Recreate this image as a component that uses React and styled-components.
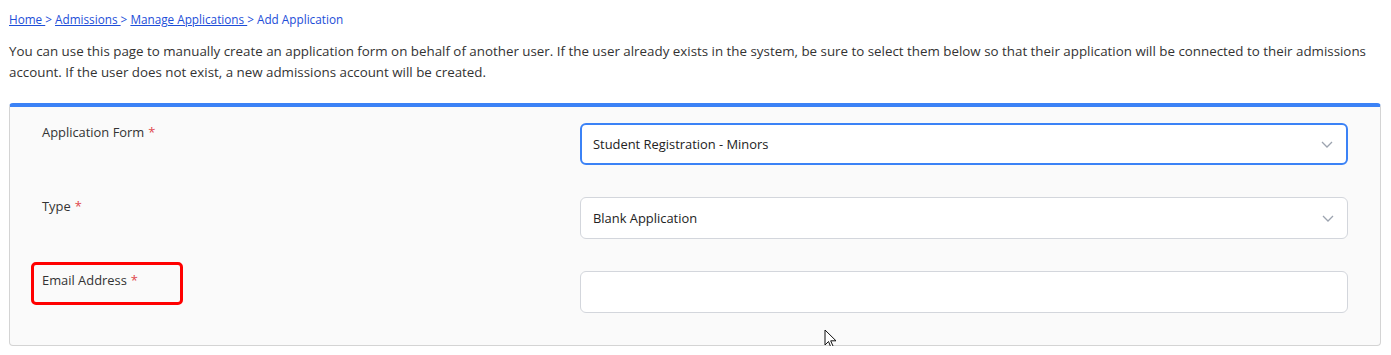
import React from "react";
import styled, { createGlobalStyle } from "styled-components";

const GlobalStyle = createGlobalStyle`
  body {
    margin: 0;
    background: #ffffff;
    font-family: "Open Sans", "Noto Sans", sans-serif;
    color: #333333;
  }
`;

const Page = styled.div`
  padding: 10px 10px 0 9px;
`;

const Breadcrumb = styled.nav`
  font-size: 11.75px;
  line-height: 18px;
  color: #1d4ed8;
  a {
    color: #1d4ed8;
    text-decoration: underline;
  }
`;

const Intro = styled.p`
  margin: 13px 0 20px;
  font-size: 13.35px;
  line-height: 21px;
  color: #333333;
`;

const Card = styled.section`
  position: relative;
  background: #fafafa;
  border: 1px solid #d4d4d4;
  border-top: 4px solid #3b82f6;
  border-radius: 4px;
  padding: 16px 32px 0 32px;
`;

const Row = styled.div`
  display: grid;
  grid-template-columns: 538px 1fr;
  margin-bottom: 32px;
`;

const Label = styled.label`
  position: relative;
  align-self: start;
  justify-self: start;
  padding-top: 1px;
  font-size: 12.9px;
  line-height: 17px;
  color: #333333;
  &::after {
    content: "";
    display: ${(p) => (p.$highlight ? "block" : "none")};
    position: absolute;
    left: -11px;
    top: -9px;
    width: 152px;
    height: 43px;
    box-sizing: border-box;
    border: 3px solid #ff0000;
    border-radius: 5px;
  }
`;

const Required = styled.span`
  color: #e0474c;
  margin-left: 4px;
`;

const Field = styled.div`
  position: relative;
  height: 42px;
  box-sizing: border-box;
  background: #ffffff;
  border: ${(p) => (p.$focused ? "2px solid #3b82f6" : "1px solid #d3d6dc")};
  border-radius: 6px;
  display: flex;
  align-items: center;
  padding: 0 ${(p) => (p.$focused ? "11px" : "12px")};
  font-size: 12.9px;
  color: #222222;
`;

const Chevron = styled.svg`
  position: absolute;
  right: 13px;
  top: 50%;
  margin-top: -3px;
`;

const Cursor = styled.svg`
  position: absolute;
  left: 814px;
  top: 222px;
`;

const ChevronIcon = () => (
  <Chevron width="12" height="7" viewBox="0 0 12 7">
    <path d="M1 1l5 5 5-5" fill="none" stroke="#9ca3af" strokeWidth="1.3" />
  </Chevron>
);

export default function App() {
  return (
    <Page>
      <GlobalStyle />
      <Breadcrumb>
        <a href="#">Home </a>&gt; <a href="#">Admissions </a>&gt;{" "}
        <a href="#">Manage Applications </a>&gt; Add Application
      </Breadcrumb>
      <Intro>
        You can use this page to manually create an application form on behalf of another
        user. If the user already exists in the system, be sure to select them below so that
        their application will be connected to their admissions account. If the user does not
        exist, a new admissions account will be created.
      </Intro>
      <Card>
        <Row>
          <Label>
            Application Form<Required>*</Required>
          </Label>
          <Field $focused>
            Student Registration - Minors
            <ChevronIcon />
          </Field>
        </Row>
        <Row>
          <Label>
            Type<Required>*</Required>
          </Label>
          <Field>
            Blank Application
            <ChevronIcon />
          </Field>
        </Row>
        <Row>
          <Label $highlight>
            Email Address<Required>*</Required>
          </Label>
          <Field />
        </Row>
        <Cursor width="14" height="20" viewBox="0 0 14 20">
          <path
            d="M1 1v15l3.5-3.5 2.5 6 2.2-1-2.5-5.7H12z"
            fill="#ffffff"
            stroke="#111111"
            strokeWidth="1"
            strokeLinejoin="round"
          />
        </Cursor>
      </Card>
    </Page>
  );
}
